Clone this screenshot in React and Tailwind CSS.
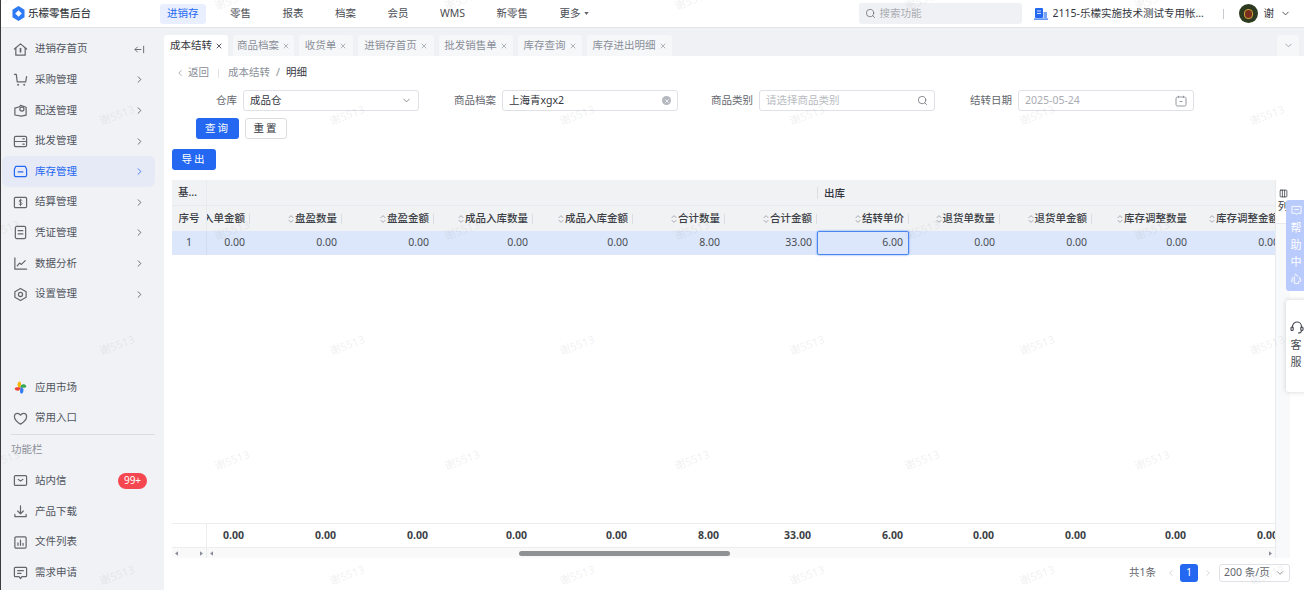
import React from 'react';
import { ChevronRight, ChevronLeft, ChevronDown, Search, X, Calendar, Columns3 } from 'lucide-react';

const stroke = { fill: 'none', stroke: 'currentColor', strokeWidth: 1.3, strokeLinecap: 'round', strokeLinejoin: 'round' };
const I = ({ children, className = 'w-[15px] h-[15px]' }) => (
  <svg viewBox="0 0 16 16" className={className} {...stroke}>{children}</svg>
);

const icons = {
  home: <><path d="M1.5 7.5 8 2l6.5 5.5" /><path d="M3 6.5V14h10V6.5" /><path d="M8 7v3.5" strokeWidth="1.8" /></>,
  cart: <><path d="M1.5 2.5h2l1 8h9l1-5.5" /><path d="M4 5h7" opacity="0" /><circle cx="5.5" cy="13.5" r=".4" /><circle cx="12" cy="13.5" r=".4" /></>,
  box: <><path d="M2 5.5 7 4l1-1.5 6 2V13l-5 1-7-1.2z" /><circle cx="9.5" cy="6.5" r="2.2" /></>,
  batch: <><rect x="1.5" y="2.5" width="13" height="11" rx="1.5" /><path d="M1.5 8h13" /><path d="M10.5 5.2h1.5M10.5 10.8h1.5" /></>,
  stock: <><path d="M3 2.5h10l1.5 3V12a1.5 1.5 0 0 1-1.5 1.5H3A1.5 1.5 0 0 1 1.5 12V5.5z" /><path d="M5.5 8.5h5" /></>,
  settle: <><rect x="1.5" y="2.5" width="13" height="11" rx="1.2" /><path d="M9.6 5.8C9 5 6.6 5 6.6 6.5c0 1.7 3 .9 3 2.7 0 1.4-2.500 1.400-3.200.5M8 4.500v7" strokeWidth="1" /></>,
  doc: <><rect x="2.500" y="1.500" width="11" height="13" rx="1.500" /><path d="M5.500 6h5M5.500 9.500h5" /></>,
  chart: <><path d="M2 2v12h12.500" /><path d="M4.500 10.500 7 7.500l2 1.500 4-4" /></>,
  gear: <><path d="M8 1.500 14 5v6l-6 3.500L2 11V5z" /><circle cx="8" cy="8" r="2.200" /></>,
  heart: <path d="M8 14S1.500 10 1.500 5.800C1.500 3.500 3.200 2.500 4.700 2.500 6.200 2.500 7.300 3.300 8 4.500c.7-1.200 1.800-2 3.300-2 1.500 0 3.200 1 3.200 3.300C14.500 10 8 14 8 14z" />,
  mail: <><rect x="1.500" y="2.800" width="13" height="10.400" rx="1.200" /><path d="M5.500 6.800 8 8.600l2.500-1.800" /></>,
  download: <><path d="M8 2v8M5 7.500 8 10.500l3-3" /><path d="M2 11v2.500h12V11" /></>,
  files: <><rect x="2" y="2" width="12" height="12" rx="1.200" /><path d="M5.300 11V8.500M8 11V5.500M10.700 11V9" /></>,
  request: <><path d="M2.500 2.500h11a1 1 0 0 1 1 1v8a1 1 0 0 1-1 1H9.500L8 14.500l-1.500-2h-4a1 1 0 0 1-1-1v-8a1 1 0 0 1 1-1z" /><path d="M5 6h6M5 9h3.500" /></>,
};

const menu = [
  ['进销存首页', 'home'], ['采购管理', 'cart'], ['配送管理', 'box'], ['批发管理', 'batch'], ['库存管理', 'stock'],
  ['结算管理', 'settle'], ['凭证管理', 'doc'], ['数据分析', 'chart'], ['设置管理', 'gear'],
];
const lower = [['站内信', 'mail'], ['产品下载', 'download'], ['文件列表', 'files'], ['需求申请', 'request']];
const nav = ['零售', '报表', '档案', '会员', 'WMS', '新零售'];
const tabs = [
  ['商品档案', 'w-[61px]'], ['收货单', 'w-[54px]'], ['进销存首页', 'w-[76px]'], ['批发销售单', 'w-[74px]'], ['库存查询', 'w-[64px]'], ['库存进出明细', 'w-[85px]'],
];
const cols = [
  ['入单金额', 'w-[43px]', '0.00', false],
  ['盘盈数量', 'w-[92px]', '0.00', true],
  ['盘盈金额', 'w-[92px]', '0.00', true],
  ['成品入库数量', 'w-[99px]', '0.00', true],
  ['成品入库金额', 'w-[100px]', '0.00', true],
  ['合计数量', 'w-[92px]', '8.00', true],
  ['合计金额', 'w-[92px]', '33.00', true],
  ['结转单价', 'w-[92px]', '6.00', true],
  ['退货单数量', 'w-[91px]', '0.00', true],
  ['退货单金额', 'w-[92px]', '0.00', true],
  ['库存调整数量', 'w-[100px]', '0.00', true],
  ['库存调整金额', 'w-[92px]', '0.00', true],
];

const Sort = () => (
  <svg viewBox="0 0 8 12" className="w-[6px] h-[10px] shrink-0 text-[#8a8f99]" fill="none" stroke="currentColor" strokeWidth="1">
    <path d="M1 4.500 4 1.500l3 3M1 7.500l3 3 3-3" />
  </svg>
);

const Mark = ({ x, y }) => (
  <span className="absolute -rotate-[20deg] text-[11px] text-[#8a8f99]/15 pointer-events-none whitespace-nowrap" style={{ left: x - 17, top: y - 8 }}>谢5513</span>
);
const marks = [];
for (let r = 0; r < 6; r++) {
  for (let c = 0; c < 7; c++) {
    marks.push({ x: (r % 2 ? 115 : 0) + c * 230, y: 110 + (r - 1) * 115 + 5 });
  }
}

const SideRow = ({ label, icon, active }) => (
  <div className={`h-[30.6px] shrink-0 flex items-center pl-[11px] pr-[10px] rounded-md ${active ? 'bg-[#e6eaf6] text-[#2468f2]' : 'text-[#50555f]'}`}>
    <span className={active ? 'text-[#2468f2]' : 'text-[#63666d]'}><I>{icons[icon]}</I></span>
    <span className="ml-[7px] flex-1">{label}</span>
    {icon === 'home'
      ? <svg viewBox="0 0 12 12" className="w-[11px] h-[11px] text-[#63666d]" fill="none" stroke="currentColor" strokeWidth="1"><path d="M1 6h7M4 3 1 6l3 3M10.500 2v8" /></svg>
      : <ChevronRight className="w-[11px] h-[11px]" strokeWidth={1.8} />}
  </div>
);

const Field = ({ label, w, children }) => (
  <div className={`${w} shrink-0 flex items-center justify-end`}>
    <span className="text-[#63666d] mr-[6px] whitespace-nowrap">{label}</span>
    <div className="w-[176px] h-[21px] rounded-[3px] border border-[#dfe1e6] bg-white flex items-center justify-between pl-[6px] pr-[6px]">
      {children}
    </div>
  </div>
);

export default function App() {
  return (
    <div className="relative w-[1304px] h-[590px] overflow-hidden bg-white border-l border-[#3a3a3a] text-[10.5px] text-[#33363d] font-['Noto_Sans','Noto_Sans_CJK_SC',sans-serif] flex flex-col">
      <header className="h-[28px] shrink-0 border-b border-[#e3e4e8] flex items-center">
        <div className="w-[159px] shrink-0 flex items-center pl-[11px]">
          <svg viewBox="0 0 14 16" className="w-[13px] h-[15px]">
            <path d="M7 0 13.500 4v8L7 16 .5 12V4z" fill="#2f7bf6" />
            <path d="M7 4.500 10.500 8 7 11.500 3.500 8z" fill="#fff" />
          </svg>
          <span className="ml-[3px] font-medium text-[#3c3f46] whitespace-nowrap">乐檬零售后台</span>
        </div>
        <nav className="flex items-center gap-[17.500px] text-[#4a4d55]">
          <span className="px-[7px] h-[20px] flex items-center rounded-[3px] bg-[#e9effe] text-[#2468f2]">进销存</span>
          {nav.map(n => <span key={n} className="px-[7px] whitespace-nowrap">{n}</span>)}
          <span className="px-[7px] flex items-center whitespace-nowrap">更多
            <svg viewBox="0 0 6 4" className="w-[5px] h-[3px] ml-[3px]"><path d="M0 0h6L3 4z" fill="#63666d" /></svg>
          </span>
        </nav>
        <div className="ml-auto mr-[13px] flex items-center">
          <div className="w-[163px] h-[21px] rounded-[3px] bg-[#f0f1f4] flex items-center pl-[6px] text-[#a9acb3]">
            <Search className="w-[11px] h-[11px] text-[#63666d]" strokeWidth={1.6} />
            <span className="ml-[4px]">搜索功能</span>
          </div>
          <svg viewBox="0 0 14 13" className="w-[14px] h-[13px] ml-[12px]">
            <rect x="1" y="1" width="8" height="10" rx="1" fill="#2468f2" />
            <rect x="9.500" y="5" width="3.500" height="6" fill="#7aa5f7" />
            <rect x="0" y="11.500" width="14" height="1.200" fill="#2468f2" />
            <path d="M3 4h4M3 6.500h4" stroke="#fff" strokeWidth=".8" />
          </svg>
          <span className="ml-[5px] w-[155px] truncate text-[#33363d]">2115-乐檬实施技术测试专用帐号管理</span>
          <span className="ml-[15px] w-px h-[10px] bg-[#c8cad0]" />
          <span className="ml-[15px] w-[19px] h-[19px] rounded-full bg-[#2d3a1f] flex items-center justify-center overflow-hidden">
            <span className="w-[9px] h-[10px] bg-[#7a2e1e] rounded-sm border border-[#c9a23a]" />
          </span>
          <span className="ml-[6px]">谢</span>
          <ChevronDown className="w-[11px] h-[11px] ml-[6px] text-[#33363d]" strokeWidth={1.8} />
        </div>
      </header>

      <div className="flex-1 flex min-h-0">
        <aside className="w-[163px] shrink-0 bg-[#f1f2f5] flex flex-col pl-px pr-[9px] pt-[6px]">
          {menu.map(([l, ic]) => <SideRow key={l} label={l} icon={ic} active={l === '库存管理'} />)}
          <div className="mt-auto" />
          <div className="h-[30.6px] flex items-center pl-[11px]">
            <svg viewBox="0 0 16 16" className="w-[15px] h-[15px]">
              <path d="M8 8C5 8 4 6 5.500 2.500 7 .5 9.500 1 8 8z" fill="#f7b500" />
              <path d="M8 8c0-3 2-4 5-3 2 1.500 2 4-5 3z" fill="#34a853" />
              <path d="M8 8c3 0 4 2 2.500 5.500C9 15.500 6.500 15 8 8z" fill="#2f7bf6" />
              <path d="M8 8c0 3-2 4-5 3C1 9.500 1 7 8 8z" fill="#ea4335" />
            </svg>
            <span className="ml-[7px] text-[#50555f]">应用市场</span>
          </div>
          <div className="h-[30.6px] flex items-center pl-[11px] text-[#50555f]">
            <span className="text-[#63666d]"><I>{icons.heart}</I></span>
            <span className="ml-[7px]">常用入口</span>
          </div>
          <div className="ml-[9px] h-px bg-[#dcdde1]" />
          <div className="h-[31px] flex items-center pl-[9px] text-[#8a8f99]">功能栏</div>
          {lower.map(([l, ic]) => (
            <div key={l} className="h-[30.6px] flex items-center pl-[11px] text-[#50555f]">
              <span className="text-[#63666d]"><I>{icons[ic]}</I></span>
              <span className="ml-[7px] flex-1">{l}</span>
              {l === '站内信' && <span className="w-[29px] h-[16px] mr-[8px] rounded-full bg-[#f5474f] text-white text-[10px] flex items-center justify-center">99+</span>}
            </div>
          ))}
          <div className="h-[2px]" />
        </aside>

        <main className="flex-1 min-w-0 flex flex-col">
          <div className="h-[28px] shrink-0 bg-[#f0f1f4] flex items-end">
            <div className="h-[21px] w-[64px] bg-white rounded-t-[3px] flex items-center pl-[6px] text-[#33363d] whitespace-nowrap">成本结转<X className="w-[8px] h-[8px] ml-[3px]" strokeWidth={2.5} /></div>
            {tabs.map(([t, w], i) => (
              <div key={t} className={`h-[21px] ${w} ml-[5px] shrink-0 bg-[#f6f7f9] rounded-t-[3px] flex items-center justify-center text-[#8a8f99] whitespace-nowrap`}>{t}<X className="w-[8px] h-[8px] ml-[3px]" strokeWidth={2} /></div>
            ))}
            <div className="ml-auto mr-[5px] w-[22px] h-[21px] bg-[#f6f7f9] rounded-t-[3px] flex items-center justify-center text-[#8a8f99]"><ChevronDown className="w-[11px] h-[11px]" strokeWidth={1.6} /></div>
          </div>

          <div className="flex-1 min-h-0 flex flex-col pl-[8px] pr-[14px]">
            <div className="h-[34px] shrink-0 flex items-center text-[#8a8f99] pl-[3px]">
              <ChevronLeft className="w-[10px] h-[10px]" strokeWidth={1.6} />
              <span className="ml-[3px]">返回</span>
              <span className="ml-[9px] w-px h-[9px] bg-[#e3e4e8]" />
              <span className="ml-[9px]">成本结转</span>
              <span className="mx-[6px]">/</span>
              <span className="text-[#33363d]">明细</span>
            </div>
            <div className="flex h-[21px] shrink-0">
              <Field label="仓库" w="w-[247px]">
                <span className="text-[#33363d]">成品仓</span>
                <ChevronDown className="w-[11px] h-[11px] text-[#63666d]" strokeWidth={1.6} />
              </Field>
              <Field label="商品档案" w="w-[259px]">
                <span className="text-[#33363d]">上海青xgx2</span>
                <span className="w-[9px] h-[9px] rounded-full bg-[#b4b7bd] flex items-center justify-center"><X className="w-[6px] h-[6px] text-white" strokeWidth={3} /></span>
              </Field>
              <Field label="商品类别" w="w-[257px]">
                <span className="text-[#b8bbc1]">请选择商品类别</span>
                <Search className="w-[11px] h-[11px] text-[#63666d]" strokeWidth={1.6} />
              </Field>
              <Field label="结转日期" w="w-[259px]">
                <span className="text-[#a9acb3]">2025-05-24</span>
                <svg viewBox="0 0 12 12" className="w-[12px] h-[12px] text-[#8a8f99]" fill="none" stroke="currentColor" strokeWidth=".9">
                  <rect x="1" y="2" width="10" height="9" rx="1.500" /><path d="M3.500 .8v2M8.500 .8v2M4.500 6.500h3" />
                </svg>
              </Field>
            </div>
            <div className="flex mt-[7px] ml-[24px] gap-[6px] shrink-0">
              <button className="w-[43px] h-[21px] rounded-[3px] bg-[#2468f2] text-white tracking-[2px]">查询</button>
              <button className="w-[42px] h-[21px] rounded-[3px] border border-[#dcdde1] bg-white tracking-[2px]">重置</button>
            </div>
            <button className="mt-[10px] w-[44px] h-[21px] shrink-0 rounded-[3px] bg-[#2468f2] text-white tracking-[2px]">导出</button>

            <div className="mt-[10px] h-[378px] shrink-0 flex">
              <div className="w-[1103px] shrink-0 flex flex-col overflow-hidden">
                <div className="h-[26px] shrink-0 bg-[#f1f2f4] flex items-center border-b border-[#e9eaed] font-medium">
                  <span className="w-[35px] shrink-0 pl-[6px] h-full flex items-center border-r border-[#e9eaed]">基…</span>
                  <span className="w-[610px] shrink-0" />
                  <span className="pl-[6px] border-l border-[#dcdde1] leading-[12px]">出库</span>
                </div>
                <div className="h-[25px] shrink-0 bg-[#f1f2f4] flex items-center font-medium text-[#3c3f46]">
                  <span className="w-[35px] shrink-0 h-full flex items-center justify-center border-r border-[#e9eaed]">序号</span>
                  {cols.map(([t, w, , s], i) => (
                    <div key={t} className={`${w} shrink-0 flex justify-end items-center overflow-hidden pr-[5px] whitespace-nowrap ${i === 11 ? '' : 'relative'}`}>
                      {s && <Sort />}<span className="ml-px">{t}</span>
                      {i < 10 && <span className="absolute right-0 w-px h-[10px] bg-[#dcdde1]" />}
                    </div>
                  ))}
                </div>
                <div className="h-[24px] shrink-0 bg-[#dce7fb] flex items-center text-[#4a4d55]">
                  <span className="w-[35px] shrink-0 h-full flex items-center justify-center border-r border-[#d2ddf2]">1</span>
                  {cols.map(([t, w, v]) => (
                    <div key={t} className={`${w} shrink-0 h-full flex justify-end items-center pr-[5px] ${t === '结转单价' ? 'border border-[#4a86f2] rounded-[2px] shadow-[0_0_2px_#4a86f2]' : ''} ${t === '库存调整金额' ? 'overflow-hidden' : ''}`}>{v}</div>
                  ))}
                </div>
                <div className="flex-1 min-h-0 flex">
                  <div className="w-[35px] shrink-0" />
                </div>
                <div className="h-[25px] shrink-0 border-t border-b border-[#eceded] flex items-center font-bold text-[#3c3f46]">
                  <span className="w-[35px] shrink-0 h-full border-r border-[#eceded]" />
                  {cols.map(([t, w, v]) => (
                    <div key={t} className={`${w} shrink-0 flex justify-end pr-[6px]`}>{v}</div>
                  ))}
                </div>
                <div className="h-[10px] shrink-0 bg-[#f9f9fa] flex items-center text-[#8a8f99]">
                  <div className="w-[35px] shrink-0 h-full flex items-center justify-between px-[3px] border-r border-[#eceded]">
                    <svg viewBox="0 0 4 6" className="w-[3px] h-[5px]"><path d="M4 0v6L0 3z" fill="currentColor" /></svg>
                    <svg viewBox="0 0 4 6" className="w-[3px] h-[5px]"><path d="M0 0v6l4-3z" fill="currentColor" /></svg>
                  </div>
                  <div className="flex-1 h-full flex items-center pl-[3px] pr-[3px]">
                    <svg viewBox="0 0 4 6" className="w-[3px] h-[5px]"><path d="M4 0v6L0 3z" fill="currentColor" /></svg>
                    <div className="ml-[306px] w-[211px] h-[5px] rounded-full bg-[#909195]" />
                    <svg viewBox="0 0 4 6" className="ml-auto w-[3px] h-[5px]"><path d="M0 0v6l4-3z" fill="currentColor" /></svg>
                  </div>
                </div>
              </div>
              <div className="w-[15px] shrink-0 bg-[#f8f9fb] border-l border-[#e9eaed] flex flex-col">
                <div className="h-[44px] border-b border-[#e9eaed] flex flex-col items-center pt-[9px] bg-white">
                  <Columns3 className="w-[9px] h-[9px] text-[#33363d]" strokeWidth={2} />
                  <span className="mt-px">列</span>
                </div>
              </div>
            </div>

            <div className="flex-1 min-h-0 flex items-center justify-end text-[#63666d] pb-[2px]">
              <span>共1条</span>
              <ChevronLeft className="w-[10px] h-[10px] ml-[10px] text-[#c0c2c7]" strokeWidth={1.6} />
              <span className="ml-[4px] w-[18px] h-[18px] rounded-[3px] bg-[#2468f2] text-white flex items-center justify-center">1</span>
              <ChevronRight className="w-[10px] h-[10px] ml-[5px] text-[#c0c2c7]" strokeWidth={1.6} />
              <div className="ml-[6px] w-[71px] h-[18px] rounded-[3px] border border-[#dfe1e6] flex items-center justify-between px-[4px]">
                <span>200 条/页</span>
                <ChevronDown className="w-[10px] h-[10px]" strokeWidth={1.6} />
              </div>
            </div>
          </div>
        </main>
      </div>

      <div className="absolute left-[1285px] top-[200px] w-[20px] h-[91px] rounded-l-[3px] bg-[#b9cafd] text-white flex flex-col items-center pt-[5px] text-[11px] leading-[17px]">
        <svg viewBox="0 0 12 12" className="w-[11px] h-[11px] mb-[3px]" fill="none" stroke="currentColor" strokeWidth="1"><path d="M1 1.500h10v7.500H7L6 10.500 5 9H1z" /><path d="M3.500 5h5" /></svg>
        <span>帮</span><span>助</span><span>中</span><span>心</span>
      </div>
      <div className="absolute left-[1285px] top-[300px] w-[20px] h-[92px] rounded-l-[3px] bg-white shadow-[0_0_5px_rgba(0,0,0,0.18)] flex flex-col items-center pt-[21px] text-[11px] leading-[17px] text-[#4a4d55]">
        <svg viewBox="0 0 14 14" className="w-[14px] h-[14px] ml-[1px] mb-px" fill="none" stroke="currentColor" strokeWidth="1.200"><path d="M2.500 7V5.500a4.500 4.500 0 0 1 9 0V7" /><rect x="1" y="6" width="2.200" height="3.500" rx="1" /><rect x="10.800" y="6" width="2.200" height="3.500" rx="1" /><path d="M11.500 9.500c0 1.500-1.500 2.500-3.500 2.500" /></svg>
        <span>客</span><span>服</span>
      </div>

      {marks.map((m, i) => <Mark key={i} {...m} />)}
    </div>
  );
}
